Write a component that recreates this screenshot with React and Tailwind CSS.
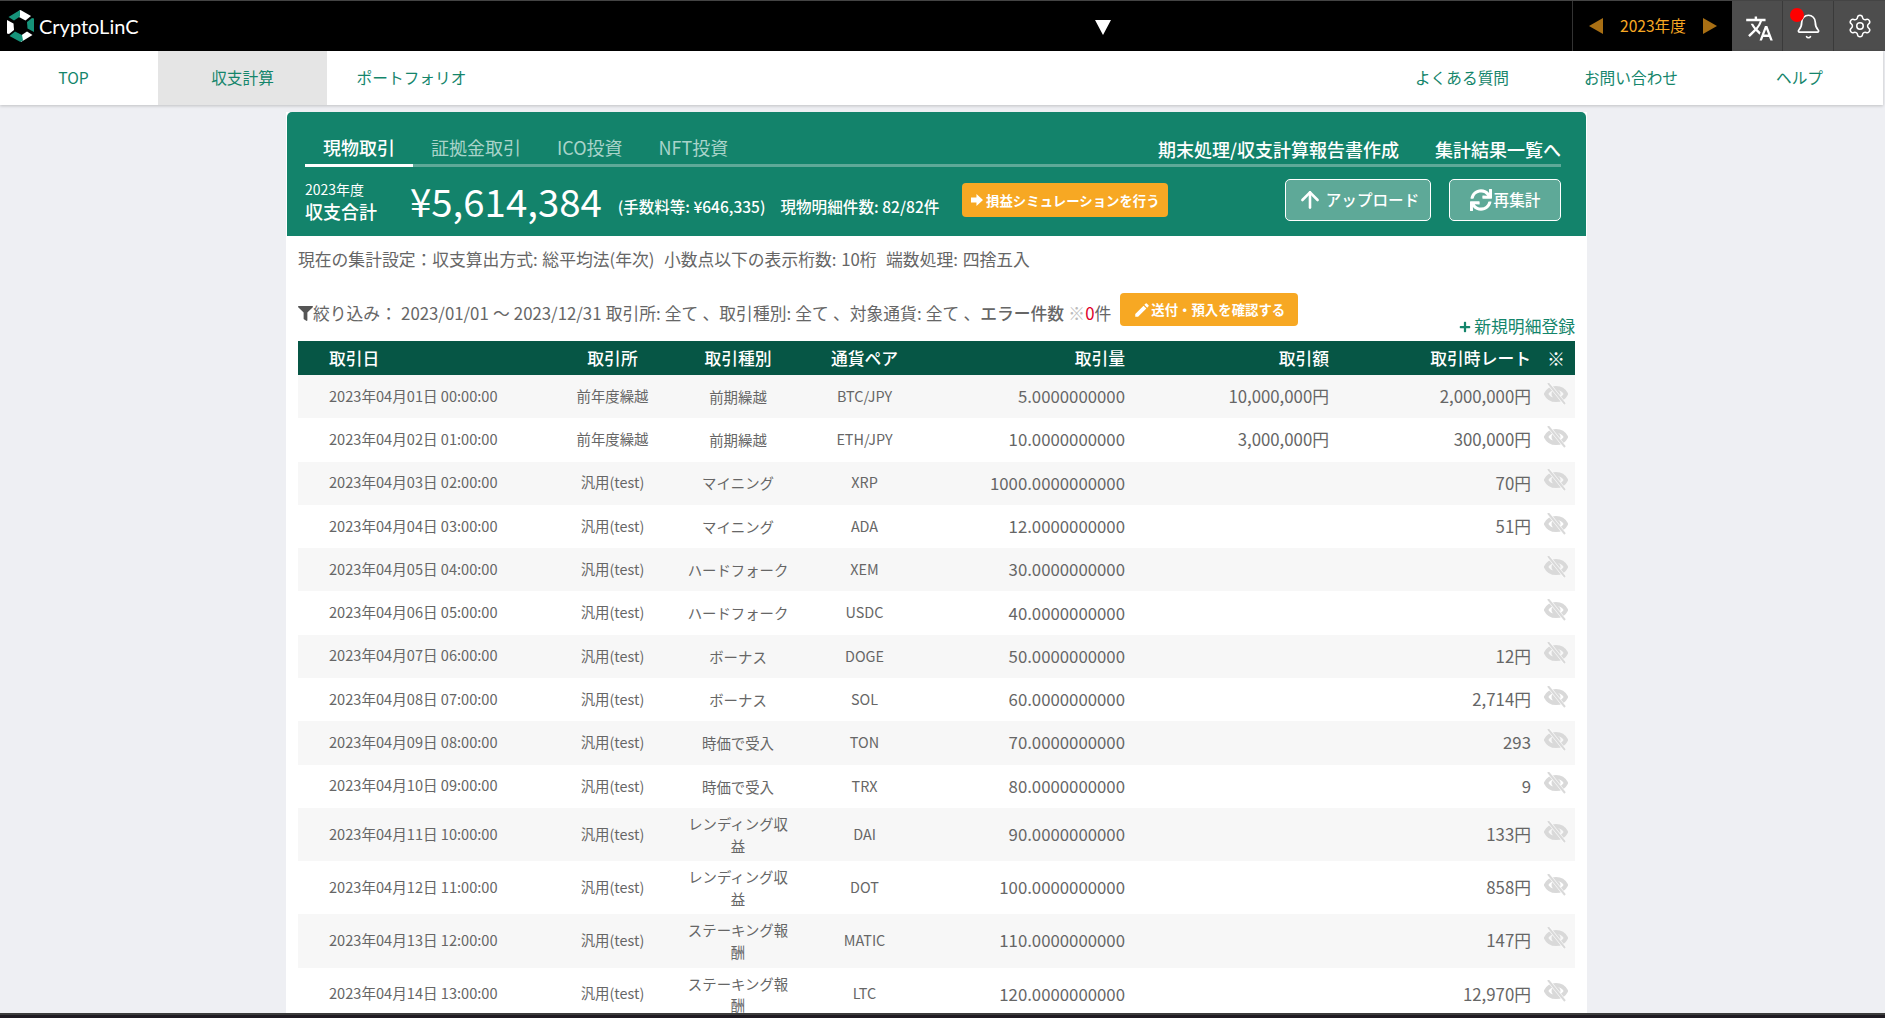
import React from "react";
import { ArrowUp, Bell, Settings } from "lucide-react";
import { FaFilter, FaPlus, FaSync } from "react-icons/fa";
import { MdEdit, MdTranslate } from "react-icons/md";

const rows = [
  ["2023年04月01日 00:00:00", "前年度繰越", "前期繰越", "BTC/JPY", "5.0000000000", "10,000,000円", "2,000,000円"],
  ["2023年04月02日 01:00:00", "前年度繰越", "前期繰越", "ETH/JPY", "10.0000000000", "3,000,000円", "300,000円"],
  ["2023年04月03日 02:00:00", "汎用(test)", "マイニング", "XRP", "1000.0000000000", "", "70円"],
  ["2023年04月04日 03:00:00", "汎用(test)", "マイニング", "ADA", "12.0000000000", "", "51円"],
  ["2023年04月05日 04:00:00", "汎用(test)", "ハードフォーク", "XEM", "30.0000000000", "", ""],
  ["2023年04月06日 05:00:00", "汎用(test)", "ハードフォーク", "USDC", "40.0000000000", "", ""],
  ["2023年04月07日 06:00:00", "汎用(test)", "ボーナス", "DOGE", "50.0000000000", "", "12円"],
  ["2023年04月08日 07:00:00", "汎用(test)", "ボーナス", "SOL", "60.0000000000", "", "2,714円"],
  ["2023年04月09日 08:00:00", "汎用(test)", "時価で受入", "TON", "70.0000000000", "", "293"],
  ["2023年04月10日 09:00:00", "汎用(test)", "時価で受入", "TRX", "80.0000000000", "", "9"],
  ["2023年04月11日 10:00:00", "汎用(test)", "レンディング収益", "DAI", "90.0000000000", "", "133円"],
  ["2023年04月12日 11:00:00", "汎用(test)", "レンディング収益", "DOT", "100.0000000000", "", "858円"],
  ["2023年04月13日 12:00:00", "汎用(test)", "ステーキング報酬", "MATIC", "110.0000000000", "", "147円"],
  ["2023年04月14日 13:00:00", "汎用(test)", "ステーキング報酬", "LTC", "120.0000000000", "", "12,970円"],
];

function Logo() {
  return (
    <svg width="27" height="32" viewBox="0 0 27 32">
      <polygon points="13.5,0 24,6 18.5,10.5 12,7 11,1.5" fill="#fff" />
      <polygon points="27,8.5 27,22 20.5,18.5 20,12 25,8" fill="#16937a" />
      <polygon points="25.5,25 14,32 14,25.5 20,21.5" fill="#fff" />
      <polygon points="13.5,32 2.5,26 8,21.5 15,25 16,30.5" fill="#16937a" />
      <polygon points="0,23.5 0,10 6.5,13.5 7,20 2,24" fill="#fff" />
      <polygon points="1.5,7 13,0 13,6.5 7,10.5" fill="#16937a" />
    </svg>
  );
}

function EyeOff() {
  return (
    <svg width="24" height="22" viewBox="0 0 24 22" className="mx-auto -mt-[6px]">
      <path d="M2 11C6 3 18 3 22 11C18 19 6 19 2 11Z" fill="none" stroke="#d9d9d9" strokeWidth="4" />
      <circle cx="12" cy="11" r="4.5" fill="#d9d9d9" />
      <line x1="4" y1="0" x2="21" y2="21" stroke="#fff" strokeOpacity="0.85" strokeWidth="3.5" />
      <line x1="4" y1="0" x2="21" y2="21" stroke="#d9d9d9" strokeWidth="2" />
    </svg>
  );
}

function App() {
  return (
    <div className="flex flex-col h-[1018px] overflow-hidden bg-[#eeeff3] text-[#666] font-['Noto_Sans_CJK_JP','Noto_Sans',sans-serif]">
      <header className="flex h-[51px] shrink-0 border-t border-[#444] bg-black">
        <div className="flex items-center w-[628px] pl-[7px] gap-[5px]">
          <Logo />
          <span className="font-['Lato',sans-serif] text-[20px] text-white">CryptoLinC</span>
        </div>
        <div className="flex flex-1 items-center justify-center pl-[6px] pt-[2px]">
          <span className="w-0 h-0 border-x-[8px] border-x-transparent border-t-[15px] border-t-white"></span>
        </div>
        <div className="flex items-center w-[160px] pl-[16px] border-l border-[#333]">
          <span className="w-0 h-0 border-y-[8px] border-y-transparent border-r-[14px] border-r-[#a86f14]"></span>
          <span className="ml-[17px] text-[15.6px] text-[#f7a823]">2023年度</span>
          <span className="ml-[17px] w-0 h-0 border-y-[8px] border-y-transparent border-l-[14px] border-l-[#a86f14]"></span>
        </div>
        <div className="flex items-center justify-center w-[51px] pl-[5px] bg-[#4d4d4d] border-r border-[#3a3a3a] text-white">
          <MdTranslate size={29} className="mt-[5px]" />
        </div>
        <div className="relative flex items-center justify-center w-[51px] bg-[#4d4d4d] border-r border-[#3a3a3a] text-white">
          <Bell size={27} strokeWidth={1.5} />
          <span className="absolute left-[7px] top-[7px] w-[14px] h-[14px] rounded-full bg-[#f00]"></span>
        </div>
        <div className="flex items-center justify-center w-[51px] bg-[#4d4d4d] text-white">
          <Settings size={26} strokeWidth={1.4} />
        </div>
      </header>

      <nav className="flex h-[54px] shrink-0 mr-[2px] bg-white text-[15.7px] text-[#14856b] shadow-[0_1px_3px_rgba(0,0,0,0.2)]">
        <a className="flex items-center justify-center w-[158px] pr-[11px]">TOP</a>
        <a className="flex items-center justify-center w-[169px] bg-[#e5e5e5]">収支計算</a>
        <a className="flex items-center justify-center w-[169px]">ポートフォリオ</a>
        <a className="flex items-center justify-center w-[169px] ml-auto pl-[1px]">よくある質問</a>
        <a className="flex items-center justify-center w-[169px] pl-[1px]">お問い合わせ</a>
        <a className="flex items-center justify-center w-[168px] pl-[1px]">ヘルプ</a>
      </nav>

      <main className="flex-1 min-h-0 overflow-hidden pt-[7px]">
        <div className="ml-[286px] w-[1301px] h-full bg-white">
          <section className="ml-[1px] w-[1299px] h-[124px] rounded-t-[5px] bg-[#13836b] text-white">
            <div className="flex items-end h-[55px] ml-[18px] mr-[25px] border-b-[3px] border-[#5ea998] text-[18px] leading-[27px]">
              <a className="px-[18px] pb-[3px] -mb-[3px] border-b-[3px] border-white font-medium">現物取引</a>
              <a className="px-[18px] pb-[3px] text-[#a9d4ca]">証拠金取引</a>
              <a className="px-[18px] pb-[3px] text-[#a9d4ca]">ICO投資</a>
              <a className="px-[18px] pb-[3px] text-[#a9d4ca]">NFT投資</a>
              <a className="ml-auto pb-[1px] font-medium">期末処理/収支計算報告書作成</a>
              <a className="ml-[36px] pb-[1px] font-medium">集計結果一覧へ</a>
            </div>
            <div className="flex items-start ml-[18px] mr-[25px]">
              <div className="w-[105px] mt-[12px]">
                <div className="text-[14px] leading-[21px]">2023年度</div>
                <div className="text-[18px] leading-[23px] font-medium">収支合計</div>
              </div>
              <div className="mt-[10px] text-[38.4px] leading-[46px]">¥5,614,384</div>
              <div className="ml-[16px] mt-[27px] text-[15.5px] leading-[24px] font-medium">(手数料等: ¥646,335)</div>
              <div className="ml-[15px] mt-[27px] text-[15.6px] leading-[24px] font-medium">現物明細件数: 82/82件</div>
              <button className="flex items-center justify-center gap-[3px] ml-[23px] mt-[16px] w-[206px] h-[34px] rounded-[4px] bg-[#f7a823] text-[13.4px] font-bold text-white">
                <svg width="12" height="12" viewBox="0 0 11 11"><path d="M0 3.2h5V0l6 5.5L5 11V7.8H0z" fill="#fff" /></svg>
                損益シミュレーションを行う
              </button>
              <button className="flex items-center justify-center gap-[3px] ml-auto mt-[12px] w-[146px] h-[42px] rounded-[5px] border border-white bg-[#5ea998] text-[15.6px] font-medium">
                <ArrowUp size={26} strokeWidth={2.4} />
                アップロード
              </button>
              <button className="flex items-center justify-center gap-[2px] ml-[18px] mt-[12px] w-[112px] h-[42px] rounded-[5px] border border-white bg-[#5ea998] text-[15.6px] font-medium">
                <FaSync size={22} />
                再集計
              </button>
            </div>
          </section>

          <div className="mx-[12px]">
            <p className="mt-[11px] text-[16.8px] leading-[25px] whitespace-nowrap [word-spacing:1px]">
              現在の集計設定：収支算出方式: 総平均法(年次) &nbsp;小数点以下の表示桁数: 10桁 &nbsp;端数処理: 四捨五入
            </p>
            <div className="flex items-start h-[48px] mt-[21px]">
              <p className="flex items-center mt-[8px] text-[16.8px] leading-[25px] whitespace-nowrap [word-spacing:0.4px]">
                <FaFilter size={15} className="text-[#555]" />
                <span>絞り込み： 2023/01/01 ～ 2023/12/31 取引所: 全て 、取引種別: 全て 、対象通貨: 全て 、<span className="font-medium">エラー件数</span> <span className="text-[#bbb]">※</span><span className="text-[#e0002a]">0</span>件</span>
              </p>
              <button className="flex items-center justify-center ml-[9px] w-[178px] h-[33px] rounded-[4px] bg-[#f7a823] text-[13.4px] font-bold text-white">
                <MdEdit size={18} />
                送付・預入を確認する
              </button>
              <a className="flex items-center gap-[3px] ml-auto mt-[21px] text-[16.8px] leading-[25px] text-[#14856b]">
                <FaPlus size={12} />
                新規明細登録
              </a>
            </div>
            <table className="w-[1277px] table-fixed border-collapse">
              <colgroup>
                <col className="w-[252px]" />
                <col className="w-[125px]" />
                <col className="w-[126px]" />
                <col className="w-[127px]" />
                <col className="w-[202px]" />
                <col className="w-[206px]" />
                <col className="w-[201px]" />
                <col className="w-[38px]" />
              </colgroup>
              <thead>
                <tr className="h-[34px] bg-[#065645] text-[16.8px] leading-[25px] text-white">
                  <th className="pl-[31px] pt-[1px] font-medium text-left">取引日</th>
                  <th className="pt-[1px] font-medium text-center">取引所</th>
                  <th className="pt-[1px] font-medium text-center">取引種別</th>
                  <th className="pt-[1px] font-medium text-center">通貨ペア</th>
                  <th className="pr-[5px] pt-[1px] font-medium text-right">取引量</th>
                  <th className="pr-[7px] pt-[1px] font-medium text-right">取引額</th>
                  <th className="pr-[6px] pt-[1px] font-medium text-right">取引時レート</th>
                  <th className="pt-[1px] font-normal text-[18px] text-center">※</th>
                </tr>
              </thead>
              <tbody>
                {rows.map((r) => (
                  <tr key={r[0]} className="h-[43.3px] even:bg-white odd:bg-[#f7f7f7]">
                    <td className="pt-[4px] pb-[6px] pl-[31px] text-[14.6px]">{r[0]}</td>
                    <td className="pt-[4px] pb-[6px] text-center text-[14.4px]">{r[1]}</td>
                    <td className="py-[5px] px-[12px] text-center text-[14.4px]">{r[2]}</td>
                    <td className="pt-[4px] pb-[6px] text-center text-[14.4px]">{r[3]}</td>
                    <td className="pt-[5px] pb-[5px] pr-[5px] text-right text-[16.8px]">{r[4]}</td>
                    <td className="pt-[5px] pb-[5px] pr-[7px] text-right text-[16.8px]">{r[5]}</td>
                    <td className="pt-[5px] pb-[5px] pr-[6px] text-right text-[16.8px]">{r[6]}</td>
                    <td className="py-[5px] text-center">
                      <EyeOff />
                    </td>
                  </tr>
                ))}
              </tbody>
            </table>
          </div>
        </div>
      </main>

      <div className="h-[5px] shrink-0 border-t-2 border-[#3c3c3c] bg-[#1f1b22]"></div>
    </div>
  );
}

export default App;
